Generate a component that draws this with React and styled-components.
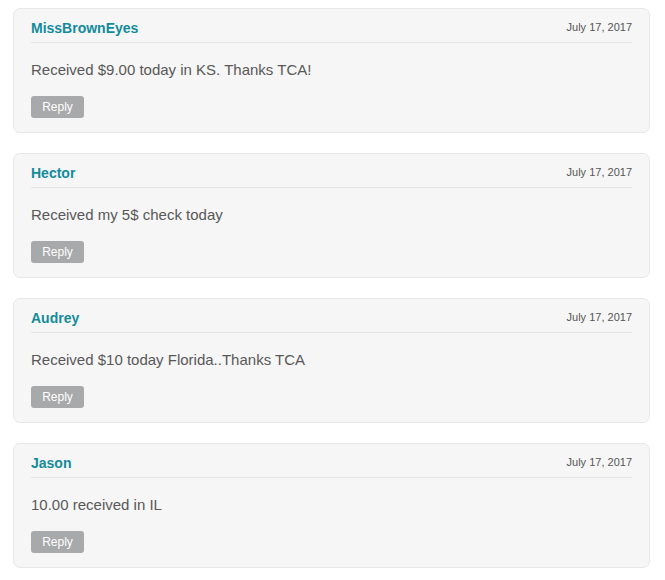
import React from "react";
import styled, { createGlobalStyle } from "styled-components";

const Global = createGlobalStyle`
  html, body { margin: 0; padding: 0; background: #ffffff; }
  body { font-family: "Liberation Sans", Arial, sans-serif; }
`;

const List = styled.div`
  display: flex;
  flex-direction: column;
  gap: 20px;
  padding: 8px 15px 0 13px;
`;

const Card = styled.article`
  background: #f6f6f6;
  border: 1px solid #e7e7e7;
  border-radius: 7px;
  padding: 9px 17px 14px 17px;
`;

const Header = styled.header`
  display: flex;
  justify-content: space-between;
  align-items: flex-start;
  border-bottom: 1px solid #e4e4e4;
  padding-bottom: 4px;
`;

const Name = styled.span`
  font-size: 14px;
  line-height: 20px;
  font-weight: bold;
  color: #138b9b;
`;

const DateText = styled.span`
  font-size: 11px;
  line-height: 18px;
  color: #555;
`;

const Body = styled.p`
  margin: 16px 0 15px 0;
  font-size: 15px;
  line-height: 22px;
  color: #585858;
`;

const ReplyButton = styled.button`
  display: block;
  width: 53px;
  height: 22px;
  padding: 0;
  border: none;
  border-radius: 3px;
  background: #a8a9ab;
  color: #fff;
  font-family: "Liberation Sans", Arial, sans-serif;
  font-size: 12px;
  line-height: 22px;
  cursor: pointer;
`;

const comments = [
  { name: "MissBrownEyes", date: "July 17, 2017", text: "Received $9.00 today in KS. Thanks TCA!" },
  { name: "Hector", date: "July 17, 2017", text: "Received my 5$ check today" },
  { name: "Audrey", date: "July 17, 2017", text: "Received $10 today Florida..Thanks TCA" },
  { name: "Jason", date: "July 17, 2017", text: "10.00 received in IL" },
];

export default function App() {
  return (
    <>
      <Global />
      <List>
        {comments.map((c) => (
          <Card key={c.name}>
            <Header>
              <Name>{c.name}</Name>
              <DateText>{c.date}</DateText>
            </Header>
            <Body>{c.text}</Body>
            <ReplyButton>Reply</ReplyButton>
          </Card>
        ))}
      </List>
    </>
  );
}
